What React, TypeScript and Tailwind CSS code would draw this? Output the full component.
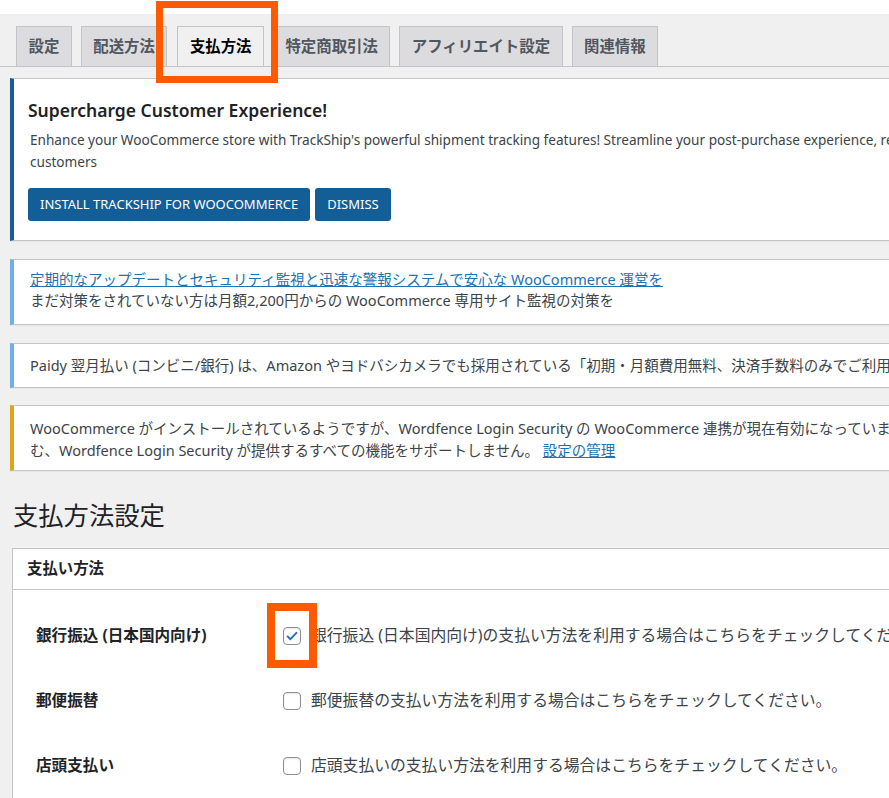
import React from "react";

const jp = "font-['Segoe_UI','Noto_Sans','Noto_Sans_CJK_JP',sans-serif]";

const tabs = ["設定", "配送方法", "支払方法", "特定商取引法", "アフィリエイト設定", "関連情報"];

function Notice({ color, children, className = "" }: { color: string; children: React.ReactNode; className?: string }) {
  return (
    <div
      className={`ml-[10px] w-[1100px] bg-white border border-[#c3c4c7] border-l-4 shadow-[0_1px_1px_rgba(0,0,0,0.04)] ${color} ${className}`}
    >
      {children}
    </div>
  );
}

function Row({ label, text, checked }: { label: string; text: string; checked?: boolean }) {
  return (
    <div className="flex items-center h-[65px]">
      <div className="w-[270px] pl-[23px] text-[15.6px] font-bold text-[#1d2327]">{label}</div>
      <div className="flex items-center gap-[10px]">
        <span className="w-[18px] h-[18px] rounded-[4px] border border-[#8c8f94] bg-white flex items-center justify-center shadow-[inset_0_1px_2px_rgba(0,0,0,0.1)]">
          {checked && (
            <svg viewBox="0 0 20 20" className="w-[16px] h-[16px]">
              <path d="M4.5 10.5l3.5 3.5 7.5-8" fill="none" stroke="#2271b1" strokeWidth="2.4" strokeLinecap="round" strokeLinejoin="round" />
            </svg>
          )}
        </span>
        <span className="text-[15.8px] text-[#3c434a] whitespace-nowrap">{text}</span>
      </div>
    </div>
  );
}

export default function App() {
  return (
    <div className={`relative w-[889px] h-[798px] overflow-hidden bg-[#f0f0f1] ${jp}`}>
      <div className="h-[14px] bg-white" />

      {/* tabs */}
      <div className="pt-[12px] border-b border-[#c3c4c7] flex pl-[16px] gap-[9px]">
        {tabs.map((t, i) =>
          i === 2 ? (
            <div
              key={t}
              className="h-[40px] -mb-px px-[11.5px] flex items-center border border-b-0 border-[#c3c4c7] bg-[#f0f0f1] text-[15.4px] font-bold text-black ml-[1px]"
            >
              {t}
            </div>
          ) : (
            <div
              key={t}
              className="h-[40px] px-[11.5px] flex items-center border border-b-0 border-[#c3c4c7] bg-[#dcdcde] text-[15.4px] font-bold text-[#50575e]"
            >
              {t}
            </div>
          )
        )}
      </div>

      {/* notices */}
      <div className="pt-[11px] flex flex-col gap-[18px]">
        <Notice color="border-l-[#135e96]" className="h-[163px] pl-[14px] pt-[19px]">
          <h2 className="text-[17.5px] leading-[25px] font-semibold text-[#1d2327]">Supercharge Customer Experience!</h2>
          <p className="mt-[6px] ml-[2px] text-[13.6px] leading-[22px] text-[#3c434a] whitespace-nowrap">
            Enhance your WooCommerce store with TrackShip's powerful shipment tracking features! Streamline your post-purchase experience, reduce inquiries and delight your
            <br />
            customers
          </p>
          <div className="mt-[15px] flex gap-[5px]">
            <button className="h-[33px] px-[12px] rounded-[3px] bg-[#135e96] text-white text-[13px]">INSTALL TRACKSHIP FOR WOOCOMMERCE</button>
            <button className="h-[33px] px-[12px] rounded-[3px] bg-[#135e96] text-white text-[13px]">DISMISS</button>
          </div>
        </Notice>

        <Notice color="border-l-[#72aee6]" className="h-[66px] pl-[16px] pt-[9px]">
          <p className="text-[14.5px] leading-[21px] text-[#3c434a] whitespace-nowrap">
            <a className="text-[#2271b1] underline">定期的なアップデートとセキュリティ監視と迅速な警報システムで安心な WooCommerce 運営を</a>
            <br />
            まだ対策をされていない方は月額2,200円からの WooCommerce 専用サイト監視の対策を
          </p>
        </Notice>

        <Notice color="border-l-[#72aee6]" className="h-[45px] pl-[16px] flex items-center">
          <p className="text-[14.5px] text-[#3c434a] whitespace-nowrap">
            Paidy 翌月払い (コンビニ/銀行) は、Amazon やヨドバシカメラでも採用されている「初期・月額費用無料、決済手数料のみでご利用いただけます」
          </p>
        </Notice>

        <Notice color="border-l-[#dba617]" className="h-[66px] pl-[16px] pt-[11px] -mt-px">
          <p className="text-[14.5px] leading-[22px] text-[#3c434a] whitespace-nowrap">
            WooCommerce がインストールされているようですが、Wordfence Login Security の WooCommerce 連携が現在有効になっていません。
            <br />
            む、Wordfence Login Security が提供するすべての機能をサポートしません。 <a className="text-[#2271b1] underline">設定の管理</a>
          </p>
        </Notice>
      </div>

      <h1 className="mt-[27px] ml-[13px] text-[25.3px] leading-[34px] font-normal text-[#1d2327]">支払方法設定</h1>

      {/* card */}
      <div className="mt-[16px] ml-[12px] w-[1000px] bg-white border border-[#c3c4c7]">
        <div className="h-[41px] border-b border-[#c3c4c7] flex items-center pl-[14px] text-[15.4px] font-bold text-[#1d2327]">
          支払い方法
        </div>
        <div className="pt-[13px]">
          <Row label="銀行振込 (日本国内向け)" text="銀行振込 (日本国内向け)の支払い方法を利用する場合はこちらをチェックしてください。" checked />
          <Row label="郵便振替" text="郵便振替の支払い方法を利用する場合はこちらをチェックしてください。" />
          <Row label="店頭支払い" text="店頭支払いの支払い方法を利用する場合はこちらをチェックしてください。" />
        </div>
      </div>

      {/* highlight boxes */}
      <div className="absolute left-[156px] top-[1px] w-[122px] h-[82px] border-[7px] border-[#ff5a00]" />
      <div className="absolute left-[267px] top-[603px] w-[50px] h-[65px] border-[8px] border-[#ff5a00]" />
    </div>
  );
}
